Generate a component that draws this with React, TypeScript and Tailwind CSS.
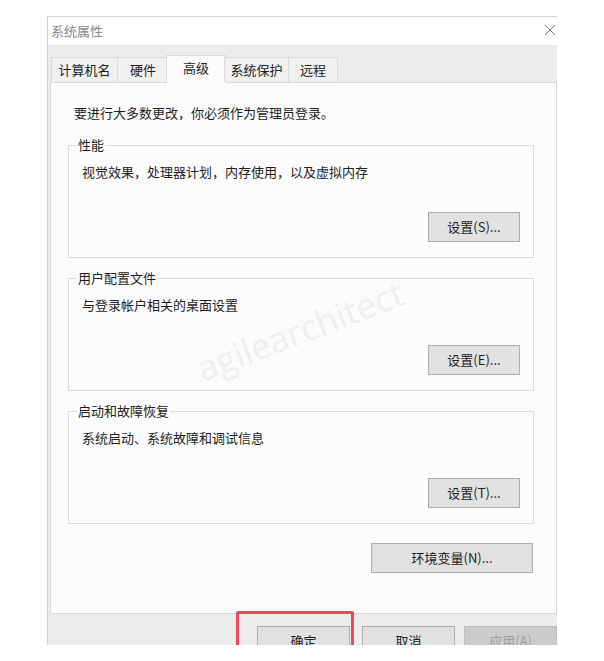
import React from "react";

const font = "font-['Noto_Sans_CJK_SC','Microsoft_YaHei',sans-serif]";

function WinButton({ label, className = "" }: { label: string; className?: string }) {
  return (
    <button className={`h-[30px] border border-[#adadad] bg-[#e1e1e1] text-[13px] leading-[18px] text-[#1e1e1e] ${className}`}>
      {label}
    </button>
  );
}

function Group({ title, text, button }: { title: string; text: string; button: string }) {
  return (
    <fieldset className="border border-[#dcdcdc] pb-[15px]">
      <legend className="ml-[8px] px-[1px] text-[13px] leading-[18px] text-[#1e1e1e]">{title}</legend>
      <div className="flex flex-col px-[13px] pt-[9px]">
        <span className="text-[13px] leading-[18px] text-[#1e1e1e]">{text}</span>
        <WinButton label={button} className="mt-[31px] w-[92px] self-end" />
      </div>
    </fieldset>
  );
}

const tabs = [
  { label: "计算机名", w: "w-[66px]" },
  { label: "硬件", w: "w-[51px]" },
  { label: "高级", w: "w-[60px]", active: true },
  { label: "系统保护", w: "w-[64px]" },
  { label: "远程", w: "w-[50px]" },
];

export default function App() {
  return (
    <div className={`relative h-[661px] w-[604px] overflow-hidden bg-white pl-[47px] pt-[16px] ${font}`}>
      <div className="h-[629px] w-[510px] overflow-hidden border-l border-t border-[#d8d5c8] bg-[#ececec]">
        {/* title bar */}
        <div className="flex h-[28px] items-center justify-between bg-white pl-[3px] pr-[1px]">
          <span className="text-[13px] leading-[18px] text-[#888]">系统属性</span>
          <svg width="12" height="12" viewBox="0 0 12 12" className="mb-[2px]">
            <path d="M1 1 L11 11 M11 1 L1 11" stroke="#777" strokeWidth="1" fill="none" />
          </svg>
        </div>

        <div className="pl-[2px] pt-[10px]">
          {/* tabs */}
          <div className="relative z-10 flex h-[27px] items-end pl-[1px]">
            {tabs.map((t) =>
              t.active ? (
                <div
                  key={t.label}
                  className={`${t.w} -mx-[2px] -mb-px flex h-[28px] items-start justify-center border border-b-0 border-[#d9d9d9] bg-[#fcfcfc] pt-[3px] text-[13px] leading-[18px] text-[#1e1e1e]`}
                >
                  {t.label}
                </div>
              ) : (
                <div
                  key={t.label}
                  className={`${t.w} flex h-[25px] items-center justify-center border border-b-0 border-r-0 border-[#d9d9d9] bg-[#f0f0f0] text-[13px] leading-[18px] text-[#1e1e1e] last:border-r`}
                >
                  {t.label}
                </div>
              )
            )}
          </div>

          {/* panel */}
          <div className="flex h-[532px] w-[507px] flex-col border border-[#d9d9d9] bg-[#fcfcfc] pl-[17px] pr-[22px]">
            <p className="ml-[6px] mt-[21px] text-[13px] leading-[18px] text-[#1e1e1e]">
              要进行大多数更改，你必须作为管理员登录。
            </p>
            <div className="mt-[14px] flex flex-col gap-[11px]">
              <Group title="性能" text="视觉效果，处理器计划，内存使用，以及虚拟内存" button="设置(S)..." />
              <Group title="用户配置文件" text="与登录帐户相关的桌面设置" button="设置(E)..." />
              <Group title="启动和故障恢复" text="系统启动、系统故障和调试信息" button="设置(T)..." />
            </div>
            <WinButton label="环境变量(N)..." className="mr-[1px] mt-[19px] w-[162px] self-end" />
          </div>

          {/* dialog buttons */}
          <div className="mt-[12px] flex pl-[207px]">
            <WinButton label="确定" className="w-[93px] shrink-0" />
            <WinButton label="取消" className="ml-[12px] w-[93px] shrink-0" />
            <button className="ml-[9px] h-[30px] w-[93px] shrink-0 border border-[#bfbfbf] bg-[#cccccc] text-[13px] leading-[18px] text-[#a0a0a0]">
              应用(A)
            </button>
          </div>
        </div>
      </div>

      {/* watermark */}
      <div className="pointer-events-none absolute left-[300px] top-[330px] -translate-x-1/2 -translate-y-1/2 -rotate-[21deg] font-['Open_Sans',sans-serif] text-[35px] leading-none text-[#efefef]">
        agilearchitect
      </div>

      {/* highlight */}
      <div className="pointer-events-none absolute left-[236px] top-[611px] h-[34px] w-[118px] rounded-t-[3px] border-[3px] border-b-0 border-[#e94b5a]" />
    </div>
  );
}
